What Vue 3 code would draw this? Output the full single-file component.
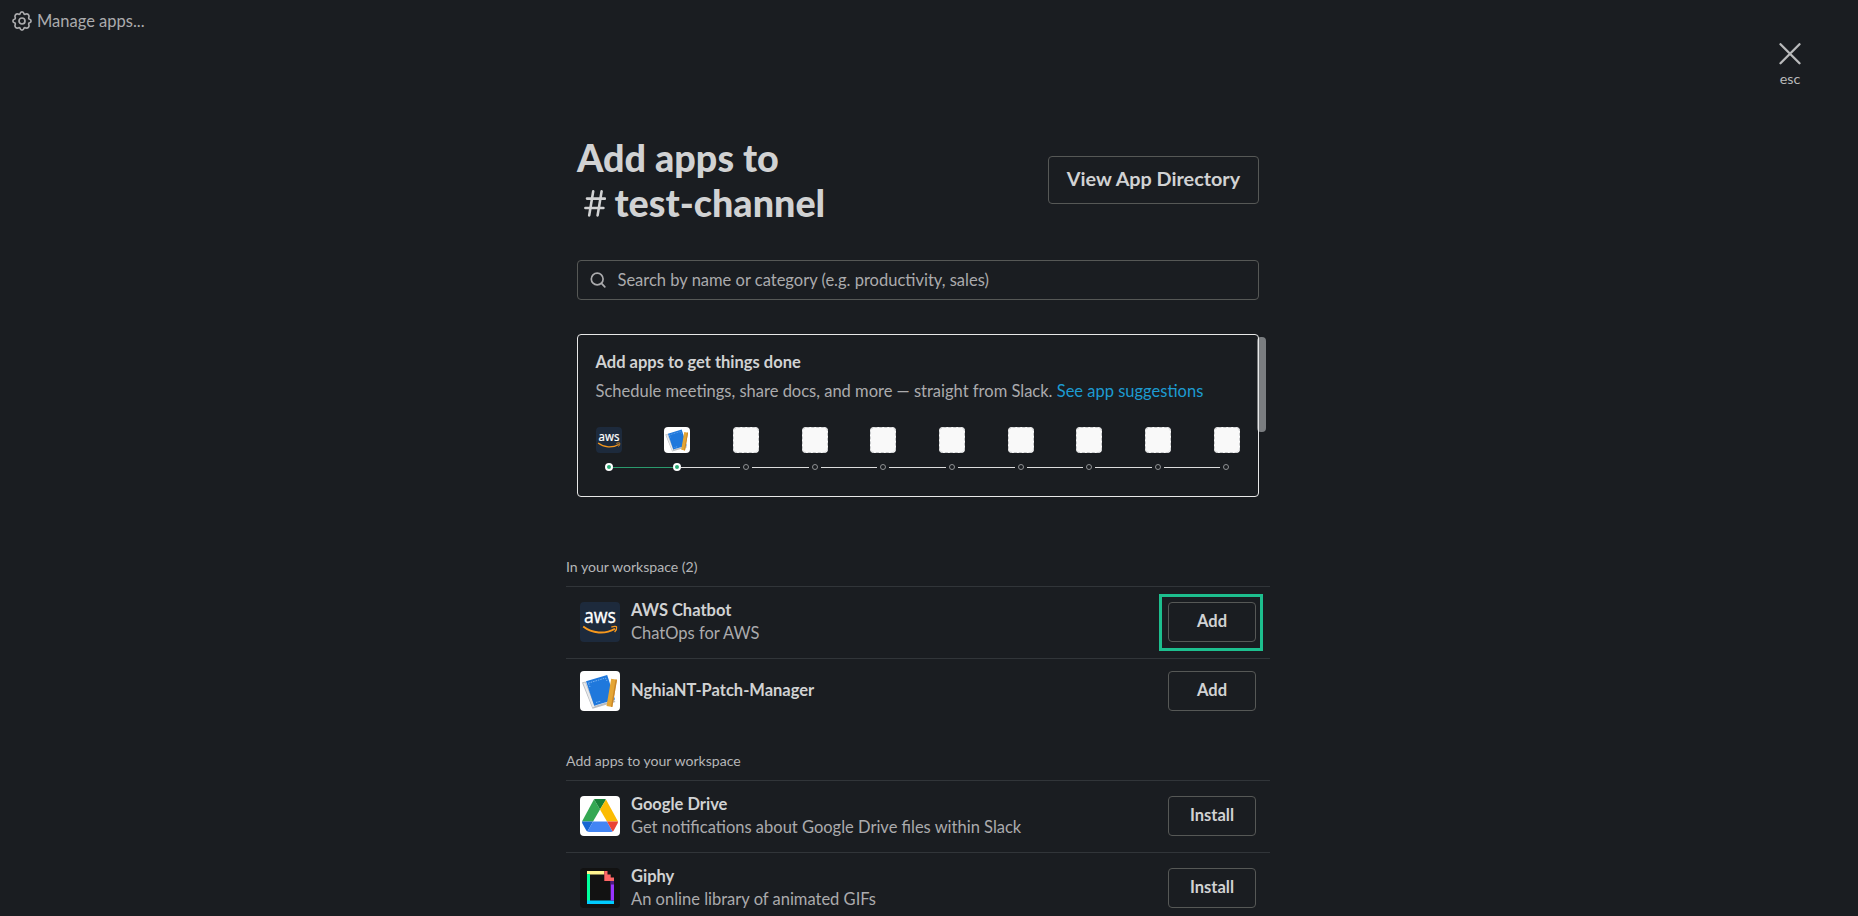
<script setup>
const steps = Array.from({ length: 10 }, (_, i) => ({ id: i, icon: ['aws', 'book'][i] || 'blank', done: i < 2 }))
const groups = [
  {
    title: 'In your workspace (2)',
    apps: [
      { icon: 'aws', name: 'AWS Chatbot', text: 'ChatOps for AWS', action: 'Add', marked: true },
      { icon: 'book', name: 'NghiaNT-Patch-Manager', text: '', action: 'Add' },
    ],
  },
  {
    title: 'Add apps to your workspace',
    apps: [
      { icon: 'drive', name: 'Google Drive', text: 'Get notifications about Google Drive files within Slack', action: 'Install' },
      { icon: 'giphy', name: 'Giphy', text: 'An online library of animated GIFs', action: 'Install' },
    ],
  },
]
</script>

<template>
  <div class="page">
    <svg class="symbols" width="0" height="0" aria-hidden="true">
      <symbol id="i-aws" viewBox="0 0 40 40">
        <rect width="40" height="40" fill="#1d2a3c" />
        <text x="4" y="21.4" textLength="32" lengthAdjust="spacingAndGlyphs" class="aws-word" fill="#fff">aws</text>
        <path d="M3.2 24.6 C12 31.5 25 32.6 35 26.8" fill="none" stroke="#f7981d" stroke-width="1.9" />
        <path d="M31.3 25.2 C34 24.2 36.4 24.2 36.6 25 C36.9 26.2 36 28.6 34.6 30" fill="none" stroke="#f7981d" stroke-width="1.3" />
      </symbol>
      <symbol id="i-book" viewBox="0 0 40 40">
        <rect width="40" height="40" fill="#fff" />
        <path d="M2 11.5 L5.5 10.5 L15.5 34.8 L34 29 L35.5 31 L12.5 37.8 Z" fill="#b9bcc0" />
        <path d="M3.2 12 L5.2 11.4 L14.8 35.6 L12.6 36.6 Z" fill="#e8eaec" />
        <path d="M6 10.2 L27.2 4 L35 28.5 L14.2 34.8 Z" fill="#1f78dc" />
        <path d="M8.5 12.5 L10 16 M8.3 12.1 L25.5 7 L27 10 M16 31.5 L21 30" fill="none" stroke="#8dc0f5" stroke-width=".8" stroke-dasharray="1.5 1" />
        <path d="M31.2 7.8 L37 8.7 L32.3 36 L26.5 35 Z" fill="#e5a635" />
        <path d="M35.6 8.5 L37 8.7 L32.3 36 L31 35.8 Z" fill="#c9862a" />
      </symbol>
      <symbol id="i-drive" viewBox="0 0 40 40">
        <rect width="40" height="40" fill="#fff" />
        <path d="M2 25.5 L14 3.3 L20 13.4 L13 25.5 Z" fill="#34a853" />
        <path d="M14 3.3 Q14.6 3 15.3 3 H24.6 Q25.4 3 26 3.4 L20 13.4 Z" fill="#188038" />
        <path d="M26 3.4 L38 25.5 H27 L20 13.4 Z" fill="#fbbc04" />
        <path d="M2 25.5 H13 L7.4 35.6 Q6.6 35 6 34 L2.4 27.6 Q2 26.6 2 25.5 Z" fill="#1967d2" />
        <path d="M13 25.5 H27 L32.6 35.6 Q31.8 36 31 36 H9 Q8.2 36 7.4 35.6 Z" fill="#4285f4" />
        <path d="M27 25.5 H38 Q38 26.6 37.5 27.6 L34 34 Q33.4 35 32.6 35.6 Z" fill="#ea4335" />
      </symbol>
      <symbol id="i-giphy" viewBox="0 0 40 40">
        <rect width="40" height="40" fill="#121212" />
        <path d="M7 3 H24.3 V6.5 H7 Z" fill="#fff48f" />
        <path d="M7 6 H10 V33 H7 Z" fill="#00ff99" />
        <path d="M7 32.6 H34 V36 H7 Z" fill="#00ccff" />
        <path d="M30.7 13 H34 V32.6 H30.7 Z" fill="#9933ff" />
        <path d="M30.7 13 H34 V16.5 H30.7 Z" fill="#4d1a80" />
        <path d="M24.3 3 H27.5 V6.4 H30.7 V9.6 H34 V13 H24.3 Z" fill="#ff6666" />
      </symbol>
      <symbol id="i-blank" viewBox="0 0 40 40">
        <rect width="40" height="40" fill="#f9f9f9" />
        <rect x=".7" y=".7" width="38.6" height="38.6" rx="6" fill="none" stroke="#c4c6c8" stroke-width="1.5" stroke-dasharray="4.6 3" />
      </symbol>
    </svg>

    <a class="manage">
      <svg width="20" height="20" viewBox="0 0 20 20" fill="none" stroke="currentColor" stroke-width="1.7" stroke-linejoin="round">
        <path d="M8 2.9 Q8.4 .9 10 .9 Q11.6 .9 12 2.9 Q12.4 3.4 13.1 3.3 Q15.1 2.4 16.4 3.6 Q17.6 4.9 16.7 6.9 Q16.6 7.6 17.1 8 Q19.1 8.4 19.1 10 Q19.1 11.6 17.1 12 Q16.6 12.4 16.7 13.1 Q17.6 15.1 16.4 16.4 Q15.1 17.6 13.1 16.7 Q12.4 16.6 12 17.1 Q11.6 19.1 10 19.1 Q8.4 19.1 8 17.1 Q7.6 16.6 6.9 16.7 Q4.9 17.6 3.6 16.4 Q2.4 15.1 3.3 13.1 Q3.4 12.4 2.9 12 Q.9 11.6 .9 10 Q.9 8.4 2.9 8 Q3.4 7.6 3.3 6.9 Q2.4 4.9 3.6 3.6 Q4.9 2.4 6.9 3.3 Q7.6 3.4 8 2.9 Z" />
        <circle cx="10" cy="10" r="3" />
      </svg>
      <span>Manage apps...</span>
    </a>

    <button class="close">
      <svg width="22" height="22" viewBox="0 0 22 22" fill="none" stroke="currentColor" stroke-width="2.3" stroke-linecap="round"><path d="M1.5 1.2 L20.5 20.2 M20.5 1.2 L1.5 20.2" /></svg>
      <span>esc</span>
    </button>

    <main class="content">
      <header class="head">
        <h1>
          <span>Add apps to</span>
          <span class="channel">
            <svg width="22" height="27" viewBox="0 0 22 27" fill="none" stroke="currentColor" stroke-width="2.6" stroke-linecap="round"><path d="M9.2 1.4 L5.2 25.4 M17.6 1.4 L13.6 25.4 M3 8.6 H21 M1.4 18 H19.4" /></svg>
            <span>test-channel</span>
          </span>
        </h1>
        <button class="directory">View App Directory</button>
      </header>

      <div class="search">
        <svg width="16" height="16" viewBox="0 0 16 16" fill="none" stroke="currentColor" stroke-width="1.7" stroke-linecap="round"><circle cx="7.2" cy="7" r="5.9" /><path d="M11.5 11.4 L14.8 14.8" /></svg>
        <span>Search by name or category (e.g. productivity, sales)</span>
      </div>

      <section class="promo">
        <i class="thumb"></i>
        <div class="card">
          <h2>Add apps to get things done</h2>
          <p>Schedule meetings, share docs, and more — straight from Slack. <a>See app suggestions</a></p>
          <div class="tiles">
            <svg v-for="s in steps" :key="s.id" class="tile" width="26" height="26"><use :href="'#i-' + s.icon" /></svg>
          </div>
          <div class="track">
            <template v-for="(s, i) in steps" :key="s.id">
              <i v-if="i" class="line" :class="{ green: s.done, near: steps[i - 1].done }"></i>
              <i class="stop" :class="{ done: s.done }"></i>
            </template>
          </div>
        </div>
      </section>

      <section v-for="g in groups" :key="g.title" class="group">
        <h3>{{ g.title }}</h3>
        <div v-for="a in g.apps" :key="a.name" class="row" :class="{ single: !a.text }">
          <svg class="logo" width="40" height="40"><use :href="'#i-' + a.icon" /></svg>
          <div class="info">
            <strong>{{ a.name }}</strong>
            <span v-if="a.text">{{ a.text }}</span>
          </div>
          <div class="action" :class="{ marked: a.marked }"><button>{{ a.action }}</button></div>
        </div>
      </section>
    </main>
  </div>
</template>

<style>
html, body { background: #1a1d21; overflow: hidden; }
</style>

<style scoped>
*, *::before { box-sizing: border-box; }
.page { position: relative; height: 916px; overflow: hidden; background: #1a1d21; color: #d1d2d3; font-family: Lato, "Open Sans", sans-serif; font-size: 16.5px; }
.symbols { display: none; }
.aws-word { font-family: "Noto Sans", sans-serif; font-weight: 400; font-size: 20px; stroke: #fff; stroke-width: .3px; }
button { font-family: inherit; background: transparent; color: #d1d2d3; padding: 0; }
.manage { position: absolute; left: 12px; top: 9px; display: flex; align-items: center; gap: 5px; height: 24px; color: #ababad; }
.close { position: absolute; left: 1768px; top: 43px; width: 44px; border: 0; display: flex; flex-direction: column; align-items: center; color: #b9babb; font-size: 14.3px; line-height: 16px; gap: 6px; }
.content { width: 682px; margin-left: 577px; padding-top: 136px; }
.head { display: flex; justify-content: space-between; align-items: center; height: 88px; }
h1 { margin: 0; font-size: 37.7px; font-weight: 900; line-height: 45px; display: flex; flex-direction: column; }
.channel { display: flex; align-items: center; gap: 8.5px; padding-left: 7px; }
.channel svg { margin-top: 2px; }
.directory { width: 211px; height: 48px; border: 1px solid #565856; border-radius: 4px; font-size: 19.8px; font-weight: 700; padding-bottom: 4px; }
.search { margin-top: 36px; height: 40px; border: 1px solid #565856; border-radius: 4px; display: flex; align-items: center; gap: 11.5px; padding-left: 12px; color: #ababad; }
.promo { position: relative; margin-top: 34px; }
.thumb { position: absolute; right: -7px; top: 3px; width: 9px; height: 95px; border-radius: 4px; background: #7a7d80; }
.card { position: relative; height: 163px; border: 1px solid #e8e8e8; border-radius: 4px; padding: 15px 18px 0 17.5px; }
h2 { margin: 0; font-size: 16.5px; font-weight: 700; line-height: 24px; }
p { margin: 5px 0 0; line-height: 24px; color: #ababad; white-space: nowrap; }
p a { color: #1d9bd1; }
.tiles { display: flex; justify-content: space-between; margin: 24px .4px 0 .2px; }
.tile { border-radius: 4px; }
.track { display: flex; align-items: center; height: 12px; margin: 8px 7.6px 0 7.3px; }
.stop { width: 12px; height: 12px; flex: none; display: flex; align-items: center; justify-content: center; }
.stop::before { content: ""; width: 6px; height: 6px; border: 1px solid #8f9193; border-radius: 50%; }
.stop.done::before { width: 8px; height: 8px; border: 2px solid #fff; background: #2bac76; }
.line { flex: 1; height: 1px; background: #dcdcdc; }
.line.near { box-shadow: -2px 0 0 #dcdcdc; }
.line.green { background: #2b9a6d; box-shadow: -2px 0 0 #2b9a6d, 2px 0 0 #2b9a6d; }
.group { width: 704px; margin-left: -11px; }
h3 { margin: 0 0 9px; font-size: 14.08px; font-weight: 400; line-height: 20px; color: #b5b6b8; }
.group:nth-of-type(2) { padding-top: 60px; }
.group:nth-of-type(3) { padding-top: 28px; }
.row { border-top: 1px solid #313539; display: flex; align-items: center; height: 72px; padding: 0 7px 1px 14px; }
.row.single { height: 65px; padding-bottom: 0; }
.single .info { padding-bottom: 2px; }
.logo { border-radius: 4px; flex: none; }
.info { flex: 1; margin-left: 11px; display: flex; flex-direction: column; line-height: 23px; }
.info strong { font-weight: 700; }
.info span { color: #ababad; }
.action { margin-top: 1px; padding: 5px 4px 6px 6px; border: 3px solid transparent; }
.action.marked { border-color: #1dbf8e; }
.action button { display: block; width: 88px; height: 40px; border: 1px solid #565856; border-radius: 4px; font-size: 16.5px; font-weight: 700; padding-bottom: 2px; }
</style>
